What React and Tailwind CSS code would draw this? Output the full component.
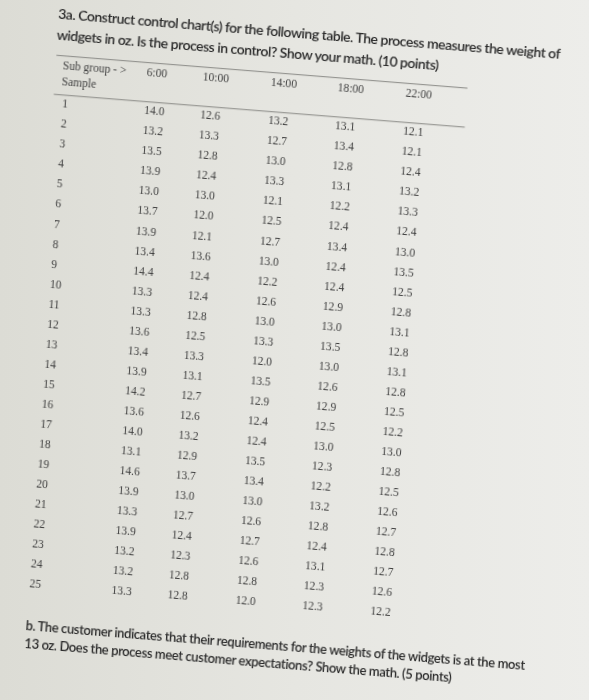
import React from "react";

const times = ["6:00", "10:00", "14:00", "18:00", "22:00"];

// readings per sub group, samples 1..25
const columns = [
  "14.0 13.2 13.5 13.9 13.0 13.7 13.9 13.4 14.4 13.3 13.3 13.6 13.4 13.9 14.2 13.6 14.0 13.1 14.6 13.9 13.3 13.9 13.2 13.2 13.3",
  "12.6 13.3 12.8 12.4 13.0 12.0 12.1 13.6 12.4 12.4 12.8 12.5 13.3 13.1 12.7 12.6 13.2 12.9 13.7 13.0 12.7 12.4 12.3 12.8 12.8",
  "13.2 12.7 13.0 13.3 12.1 12.5 12.7 13.0 12.2 12.6 13.0 13.3 12.0 13.5 12.9 12.4 12.4 13.5 13.4 13.0 12.6 12.7 12.6 12.8 12.0",
  "13.1 13.4 12.8 13.1 12.2 12.4 13.4 12.4 12.4 12.9 13.0 13.5 13.0 12.6 12.9 12.5 13.0 12.3 12.2 13.2 12.8 12.4 13.1 12.3 12.3",
  "12.1 12.1 12.4 13.2 13.3 12.4 13.0 13.5 12.5 12.8 13.1 12.8 13.1 12.8 12.5 12.2 13.0 12.8 12.5 12.6 12.7 12.8 12.7 12.6 12.2",
].map((c) => c.split(" "));

const rows = columns[0].map((_, i) => columns.map((c) => c[i]));

const gridCols = "grid grid-cols-[91px_56px_68px_67px_68px_61px]";

const App = () => {
  return (
    <div className="w-[589px] h-[700px] overflow-hidden bg-gradient-to-r from-[#dcdcd5] via-[#e6e6e1] to-[#ededea]">
      <div className="origin-top-left [transform:matrix(1,0.08,-0.068,1,0,0)] blur-[0.3px]">
        {/* question a */}
        <div className="-mt-[2px] pl-[59px] font-['Lato',sans-serif] text-[14px] leading-[21px] font-semibold text-[#2a2a2a] tracking-[-0.5px] whitespace-nowrap">
          <p>
            3a. Construct control chart(s) for the following table. The process
            measures the weight of
          </p>
          <p>widgets in oz. Is the process in control? Show your math. (10 points)</p>
        </div>

        {/* table */}
        <div className="mt-[10px] ml-[60px] w-[411px] font-['Liberation_Serif',serif] text-[11.5px] text-[#404040]">
          <div className={`${gridCols} border-t border-b border-[#8a8a86] pt-[1px] pb-[5px] leading-[16px]`}>
            <div className="pl-[7px]">
              Sub group - &gt;
              <br />
              Sample
            </div>
            {times.map((t) => (
              <div key={t}>{t}</div>
            ))}
          </div>
          <div className="-mt-[2px]">
            {rows.map((r, i) => (
              <div key={i} className={`${gridCols} h-[20px] leading-[20px]`}>
                <div className="pl-[9px]">{i + 1}</div>
                {r.map((v, j) => (
                  <div key={j}>{v}</div>
                ))}
              </div>
            ))}
          </div>
        </div>

        {/* question b */}
        <div className="mt-[23px] pl-[68px] font-['Lato',sans-serif] text-[13px] leading-[18px] font-semibold text-[#2a2a2a] tracking-[-0.4px] whitespace-nowrap">
          <p>
            b. The customer indicates that their requirements for the weights of
            the widgets is at the most
          </p>
          <p>
            13 oz. Does the process meet customer expectations? Show the math. (5
            points)
          </p>
        </div>
      </div>
    </div>
  );
};

export default App;
